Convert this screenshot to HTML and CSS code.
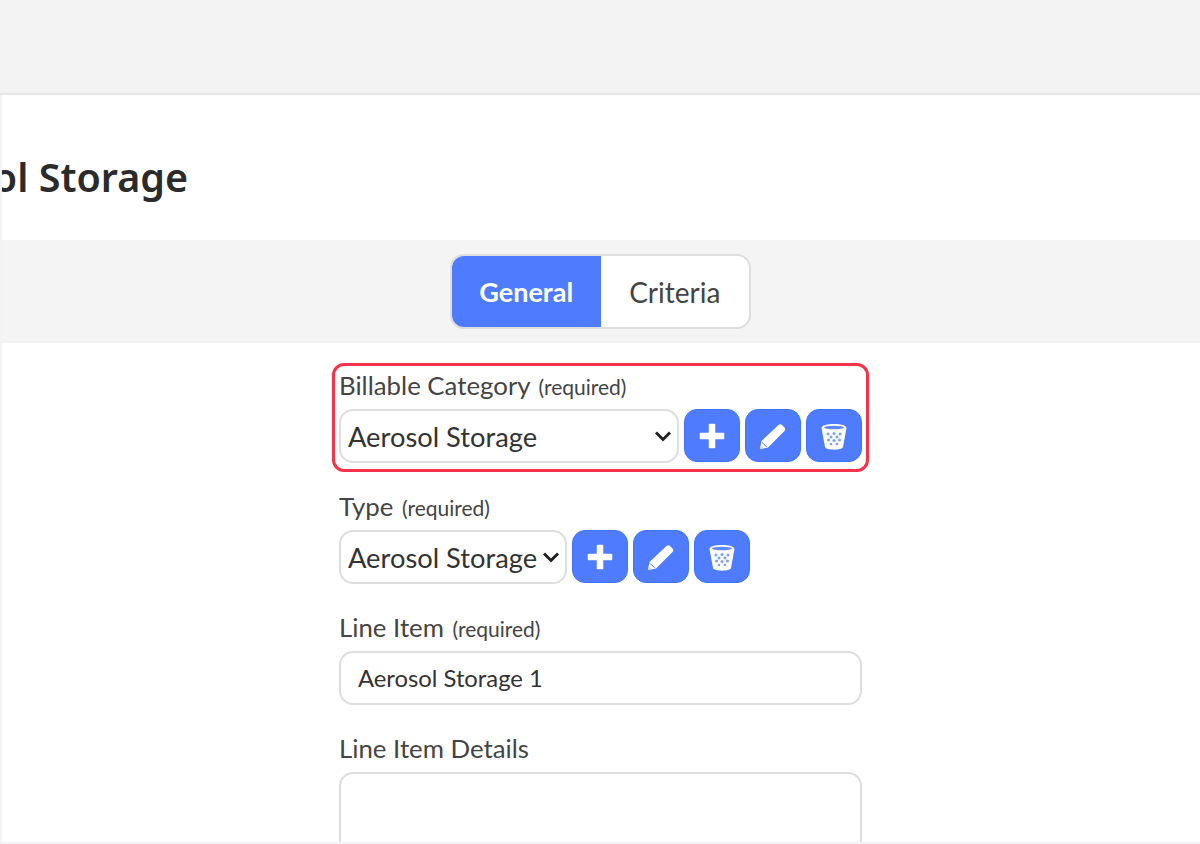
FILE: index.html
```html
<!DOCTYPE html>
<html lang="en">

<head>
    <meta charset="UTF-8">
    <meta name="viewport" content="width=device-width, initial-scale=1.0">
    <title>Aerosol Storage</title>
    <link rel="stylesheet" href="styles.css">
</head>

<body>
    <svg class="icon-defs">
        <symbol id="icon-plus" viewBox="0 0 28 28">
            <path d="M11.500 2.500h5v9h9v5h-9v9h-5v-9h-9v-5h9z" fill="#fff" stroke="#fff" stroke-width="1.500" stroke-linejoin="round"/>
        </symbol>
        <symbol id="icon-pencil" viewBox="0 0 28 28">
            <path d="M1 27l1.500-8L19.500 3c1-1 2.500-1 3.500 0l2.500 2.500c1 1 1 2.500 0 3.500L9 25.500z" fill="#fff"/>
            <path d="M3.200 20.500l4.500 4.500" stroke="#4f7cff" stroke-width="1"/>
            <path d="M1 27l.7-3.800 3 3z" fill="#c9d7ff"/>
        </symbol>
        <symbol id="icon-trash" viewBox="0 0 28 28">
            <path d="M1.500 6c0-5.500 25-5.500 25 0l-3.500 19c-.6 3.500-17.400 3.500-18 0z" fill="#fff"/>
            <ellipse cx="14" cy="5.500" rx="10" ry="1.800" fill="#5f88ff"/>
            <g fill="#7f9fff">
                <circle cx="8" cy="12" r="1.500"/>
                <circle cx="14" cy="11.500" r="1.500"/>
                <circle cx="20" cy="12" r="1.500"/>
                <circle cx="11" cy="15" r="1.500"/>
                <circle cx="17" cy="15" r="1.500"/>
                <circle cx="8.500" cy="18" r="1.500"/>
                <circle cx="14" cy="18.500" r="1.500"/>
                <circle cx="19.500" cy="18" r="1.500"/>
                <circle cx="11" cy="22" r="1.300"/>
                <circle cx="17" cy="22" r="1.300"/>
            </g>
        </symbol>
    </svg>
    <div class="top-bar"></div>
    <div class="card">
        <div class="title-row">
            <h1 class="title">Aerosol Storage</h1>
        </div>
        <div class="tab-band">
            <div class="tabs">
                <button class="tab active">General</button>
                <button class="tab">Criteria</button>
            </div>
        </div>
        <form class="form">
            <div class="field highlighted">
                <label class="field-label">Billable Category <small>(required)</small></label>
                <div class="control-row">
                    <select class="select wide">
                        <option>Aerosol Storage</option>
                    </select>
                    <button type="button" class="icon-btn"><svg class="icon"><use href="#icon-plus"/></svg></button>
                    <button type="button" class="icon-btn"><svg class="icon"><use href="#icon-pencil"/></svg></button>
                    <button type="button" class="icon-btn"><svg class="icon"><use href="#icon-trash"/></svg></button>
                </div>
            </div>
            <div class="field">
                <label class="field-label">Type <small>(required)</small></label>
                <div class="control-row">
                    <select class="select">
                        <option>Aerosol Storage</option>
                    </select>
                    <button type="button" class="icon-btn"><svg class="icon"><use href="#icon-plus"/></svg></button>
                    <button type="button" class="icon-btn"><svg class="icon"><use href="#icon-pencil"/></svg></button>
                    <button type="button" class="icon-btn"><svg class="icon"><use href="#icon-trash"/></svg></button>
                </div>
            </div>
            <div class="field">
                <label class="field-label">Line Item <small>(required)</small></label>
                <input class="input" type="text" value="Aerosol Storage 1">
            </div>
            <div class="field">
                <label class="field-label">Line Item Details</label>
                <textarea class="input textarea"></textarea>
            </div>
        </form>
    </div>
</body>

</html>
```

FILE: styles.css
```css
* {
    box-sizing: border-box;
}

html,
body {
    margin: 0;
    height: 844px;
    overflow: hidden;
}

body {
    background-color: #f3f3f7;
    font-family: "Lato", "Liberation Sans", sans-serif;
    color: #444;
    padding-bottom: 2px;
    display: flex;
    flex-direction: column;
}

.icon-defs {
    display: none;
}

.top-bar {
    height: 95px;
    flex: none;
    background-color: #f3f3f3;
    border-bottom: 2px solid #e6e6e6;
}

.card {
    flex: 1;
    margin-left: 2px;
    background-color: #fff;
    overflow: hidden;
}

.title-row {
    height: 145px;
    display: flex;
    align-items: center;
    padding-top: 19px;
    overflow: hidden;
}

.title {
    margin: 0 0 0 -119px;
    font-family: "Noto Sans", sans-serif;
    font-size: 39.500px;
    font-weight: 600;
    color: #2b2b2b;
    white-space: nowrap;
}

.tab-band {
    height: 103px;
    background-color: #f4f4f4;
    display: flex;
    justify-content: center;
    align-items: flex-start;
    padding: 14px 1px 0 0;
}

.tabs {
    display: flex;
    width: 301px;
    height: 75px;
    border: 2px solid #dedede;
    border-radius: 14px;
    overflow: hidden;
    background-color: #fff;
}

.tab {
    border: none;
    background: none;
    padding: 0;
    font-family: inherit;
    font-size: 28px;
    color: #444;
    flex: 1;
}

.tab.active {
    background-color: #4f7cff;
    color: #fff;
    font-size: 27px;
    font-weight: 700;
}

.form {
    width: 523px;
    margin-left: 337px;
    padding-top: 29px;
}

.field {
    position: relative;
    margin-bottom: 30px;
}

.highlighted::after {
    content: "";
    position: absolute;
    top: -9px;
    left: -7px;
    right: -7px;
    bottom: -9px;
    border: 3px solid #f5334a;
    border-radius: 12px;
}

.field-label {
    display: block;
    height: 37px;
    font-size: 25.800px;
    line-height: 26px;
}

.field-label small {
    font-size: 21px;
    margin-left: 2px;
}

.control-row {
    display: flex;
    gap: 5px;
    height: 54px;
}

.select {
    width: 228px;
    height: 54px;
    padding: 0 7px;
    border: 2px solid #dedede;
    border-radius: 14px;
    background: #fff url("data:image/svg+xml,%3Csvg xmlns='http://www.w3.org/2000/svg' viewBox='0 0 18 12'%3E%3Cpath d='M2 2.500l7 7 7-7' fill='none' stroke='%23222' stroke-width='3'/%3E%3C/svg%3E") no-repeat right 5px center / 18px 12px;
    appearance: none;
    font-family: inherit;
    font-size: 27.300px;
    color: #333;
}

.select.wide {
    width: 340px;
}

.icon-btn {
    width: 56px;
    height: 53px;
    padding: 0;
    border: 1px solid #3f72ff;
    border-radius: 13px;
    background-color: #4f7cff;
    display: flex;
    align-items: center;
    justify-content: center;
}

.icon {
    width: 28px;
    height: 28px;
}

.input {
    display: block;
    width: 100%;
    height: 54px;
    padding: 0 17px;
    border: 2px solid #dedede;
    border-radius: 14px;
    background-color: #fff;
    font-family: inherit;
    font-size: 23.800px;
    color: #333;
}

.textarea {
    height: 140px;
    resize: none;
}
```
